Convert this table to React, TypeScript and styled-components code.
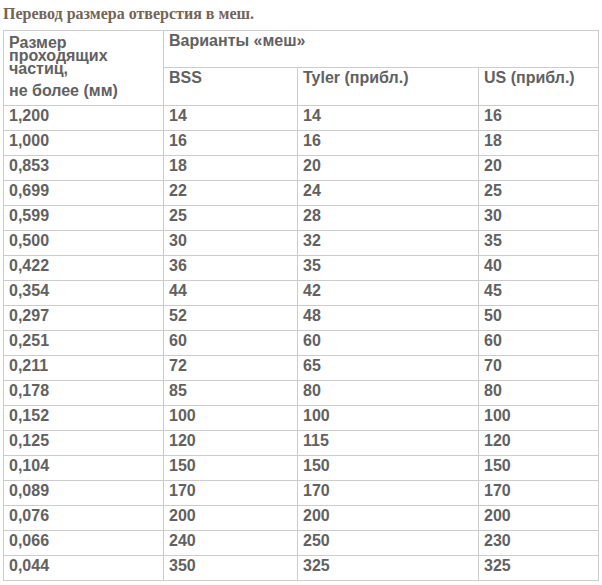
import React from "react";
import styled, { createGlobalStyle } from "styled-components";

const Global = createGlobalStyle`
  html, body { margin: 0; padding: 0; background: #fff; }
`;

const Page = styled.div`
  padding: 5px 3px 0 3px;
  width: 595px;
`;

const Title = styled.div`
  font-family: "Liberation Serif", "Times New Roman", serif;
  font-weight: bold;
  font-size: 16px;
  line-height: 18px;
  color: #736456;
  height: 25px;
`;

const Table = styled.table`
  border-collapse: collapse;
  width: 595px;
  table-layout: fixed;
  font-family: "Liberation Sans", Arial, sans-serif;
  font-weight: bold;
  font-size: 16px;
  color: #616161;
`;

const Cell = styled.td<{ $h?: number }>`
  border: 1px solid #cccccc;
  padding: 1px 5px 5px 5px;
  line-height: 18px;
  vertical-align: top;
  text-align: left;
  height: ${(p) => (p.$h ? `${p.$h}px` : "18px")};
  box-sizing: content-box;
`;

const Tight = styled.div`
  line-height: 13px;
  padding-top: 4px;
`;

const Tail = styled.div`
  margin-top: 7px;
`;

const rows: [string, string, string, string][] = [
  ["1,200", "14", "14", "16"],
  ["1,000", "16", "16", "18"],
  ["0,853", "18", "20", "20"],
  ["0,699", "22", "24", "25"],
  ["0,599", "25", "28", "30"],
  ["0,500", "30", "32", "35"],
  ["0,422", "36", "35", "40"],
  ["0,354", "44", "42", "45"],
  ["0,297", "52", "48", "50"],
  ["0,251", "60", "60", "60"],
  ["0,211", "72", "65", "70"],
  ["0,178", "85", "80", "80"],
  ["0,152", "100", "100", "100"],
  ["0,125", "120", "115", "120"],
  ["0,104", "150", "150", "150"],
  ["0,089", "170", "170", "170"],
  ["0,076", "200", "200", "200"],
  ["0,066", "240", "250", "230"],
  ["0,044", "350", "325", "325"],
];

export default function App() {
  return (
    <Page>
      <Global />
      <Title>Перевод размера отверстия в меш.</Title>
      <Table>
        <colgroup>
          <col style={{ width: 160 }} />
          <col style={{ width: 134 }} />
          <col style={{ width: 181 }} />
          <col style={{ width: 120 }} />
        </colgroup>
        <thead>
          <tr>
            <Cell as="th" rowSpan={2} $h={66}>
              <Tight>Размер проходящих частиц,</Tight>
              <Tail>не более (мм)</Tail>
            </Cell>
            <Cell as="th" colSpan={3} $h={29}>
              Варианты «меш»
            </Cell>
          </tr>
          <tr>
            <Cell as="th" $h={30}>BSS</Cell>
            <Cell as="th" $h={30}>Tyler (прибл.)</Cell>
            <Cell as="th" $h={30}>US (прибл.)</Cell>
          </tr>
        </thead>
        <tbody>
          {rows.map((r) => (
            <tr key={r[0]}>
              {r.map((v, i) => (
                <Cell key={i}>{v}</Cell>
              ))}
            </tr>
          ))}
        </tbody>
      </Table>
    </Page>
  );
}
